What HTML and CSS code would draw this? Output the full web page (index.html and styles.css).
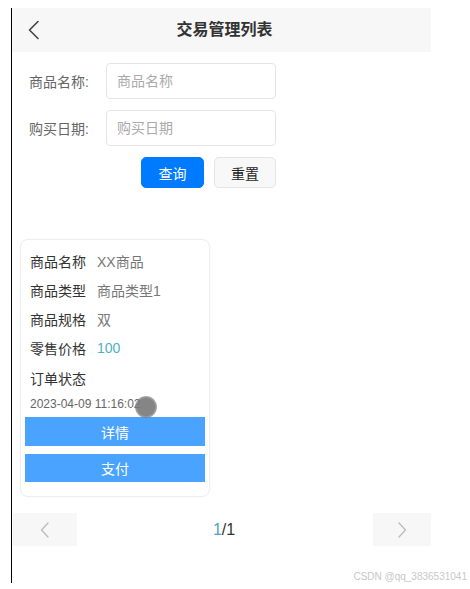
FILE: index.html
```html
<!DOCTYPE html>
<html lang="zh-CN">
<head>
<meta charset="utf-8">
<title>交易管理列表</title>
<link rel="stylesheet" href="styles.css">
</head>
<body>
<div class="frame">
  <header class="nav">
    <span class="nav-back">
      <svg width="14" height="20" viewBox="0 0 14 20"><polyline points="11,1.5 2.5,10 11,18.5" fill="none" stroke="#444" stroke-width="1.6" stroke-linecap="round" stroke-linejoin="round"/></svg>
    </span>
    <h1 class="nav-title">交易管理列表</h1>
    <span></span>
  </header>

  <form class="search">
    <div class="search-row">
      <label class="search-label">商品名称:</label>
      <div class="search-input">商品名称</div>
    </div>
    <div class="search-row">
      <label class="search-label">购买日期:</label>
      <div class="search-input">购买日期</div>
    </div>
    <div class="search-actions">
      <button type="button" class="btn btn-primary">查询</button>
      <button type="button" class="btn btn-default">重置</button>
    </div>
  </form>

  <section class="card">
    <div class="card-row"><span class="card-label">商品名称</span><span class="card-value">XX商品</span></div>
    <div class="card-row"><span class="card-label">商品类型</span><span class="card-value">商品类型1</span></div>
    <div class="card-row"><span class="card-label">商品规格</span><span class="card-value">双</span></div>
    <div class="card-row"><span class="card-label">零售价格</span><span class="card-value price">100</span></div>
    <div class="card-row status"><span class="card-label">订单状态</span></div>
    <div class="card-date">2023-04-09 11:16:02<span class="touch-dot"></span></div>
    <button type="button" class="card-btn">详情</button>
    <button type="button" class="card-btn second">支付</button>
  </section>

  <nav class="pager">
    <span class="pager-btn prev">
      <svg width="10" height="16" viewBox="0 0 10 16"><polyline points="8,1 1.5,8 8,15" fill="none" stroke="#bbb" stroke-width="1.3" stroke-linecap="round" stroke-linejoin="round"/></svg>
    </span>
    <span class="pager-num"><span class="pager-cur">1</span>/1</span>
    <span class="pager-btn next">
      <svg width="10" height="16" viewBox="0 0 10 16"><polyline points="2,1 8.5,8 2,15" fill="none" stroke="#bbb" stroke-width="1.3" stroke-linecap="round" stroke-linejoin="round"/></svg>
    </span>
  </nav>
</div>
<div class="watermark">CSDN @qq_3836531041</div>
</body>
</html>
```

FILE: styles.css
```css
* { box-sizing: border-box; }

html, body {
  margin: 0;
  padding: 0;
  background: #fff;
}

body {
  font-family: "Liberation Sans", "Noto Sans CJK SC", sans-serif;
  font-size: 14px;
  color: #333;
  position: relative;
  width: 470px;
  height: 589px;
  overflow: hidden;
}

.frame {
  margin: 8px 0 0 11px;
  width: 420px;
  height: 575px;
  border-left: 1px solid #000;
}

.nav {
  height: 44px;
  background: #f7f7f7;
  display: grid;
  grid-template-columns: 50px 1fr 44px;
  align-items: center;
}

.nav-back {
  display: flex;
  align-items: center;
  padding-left: 15px;
  height: 44px;
}

.nav-title {
  margin: 0;
  text-align: center;
  font-size: 16px;
  font-weight: bold;
  color: #333;
  line-height: 44px;
}

.search {
  margin: 0;
  padding: 11px 0 0 17px;
}

.search-row {
  display: flex;
  align-items: center;
  height: 36px;
  margin-bottom: 11px;
}

.search-label {
  width: 77px;
  color: #666;
  font-size: 14px;
}

.search-input {
  width: 170px;
  height: 36px;
  border: 1px solid #e5e5e5;
  border-radius: 4px;
  padding-left: 10px;
  line-height: 34px;
  color: #aaa;
  font-size: 14px;
}

.search-actions {
  width: 247px;
  display: flex;
  justify-content: flex-end;
  gap: 10px;
}

.btn {
  height: 31px;
  border-radius: 5px;
  font-family: inherit;
  font-size: 14px;
  padding: 0;
  cursor: pointer;
}

.btn-primary {
  width: 63px;
  background: #007aff;
  border: 1px solid #007aff;
  color: #fff;
}

.btn-default {
  width: 62px;
  background: #f8f8f8;
  border: 1px solid #e5e5e5;
  color: #222;
}

.card {
  margin: 51px 0 0 8px;
  width: 190px;
  height: 258px;
  border: 1px solid #eee;
  border-radius: 8px;
  padding: 6px 4px 0 4px;
  box-shadow: 0 0 2px rgba(0, 0, 0, 0.04);
}

.card-row {
  height: 29px;
  display: flex;
  align-items: center;
  padding-left: 5px;
}

.card-row.status {
  height: 31px;
}

.card-label {
  color: #333;
  width: 67px;
  font-size: 14px;
}

.card-value {
  color: #777;
  font-size: 14px;
}

.card-value.price {
  color: #4fb0c6;
}

.card-date {
  position: relative;
  height: 18px;
  line-height: 18px;
  padding-left: 5px;
  color: #666;
  font-size: 12px;
  margin: 2px 0 4px;
}

.touch-dot {
  position: absolute;
  left: 110px;
  top: 1px;
  width: 22px;
  height: 22px;
  border-radius: 50%;
  background: radial-gradient(circle, rgba(120, 120, 120, 0.9) 55%, rgba(120, 120, 120, 0.5) 75%, rgba(120, 120, 120, 0) 100%);
}

.card-btn {
  display: block;
  width: 180px;
  height: 29px;
  border: none;
  border-radius: 0;
  background: #4aa3ff;
  color: #fff;
  font-family: inherit;
  font-size: 14px;
  padding: 0;
}

.card-btn.second {
  margin-top: 8px;
  height: 28px;
}

.pager {
  margin-top: 16px;
  display: flex;
  align-items: center;
  justify-content: space-between;
  height: 33px;
}

.pager-btn {
  height: 33px;
  background: #f7f7f7;
  display: flex;
  align-items: center;
  justify-content: center;
}

.pager-btn.prev {
  width: 64px;
  margin-left: 1px;
}

.pager-btn.next {
  width: 58px;
}

.pager-num {
  font-size: 16px;
  color: #333;
  margin-right: 2px;
}

.pager-cur {
  color: #4fa6c2;
}

.watermark {
  position: absolute;
  right: 3px;
  top: 571px;
  font-size: 10px;
  color: #c8c8c8;
  letter-spacing: 0;
}
```
